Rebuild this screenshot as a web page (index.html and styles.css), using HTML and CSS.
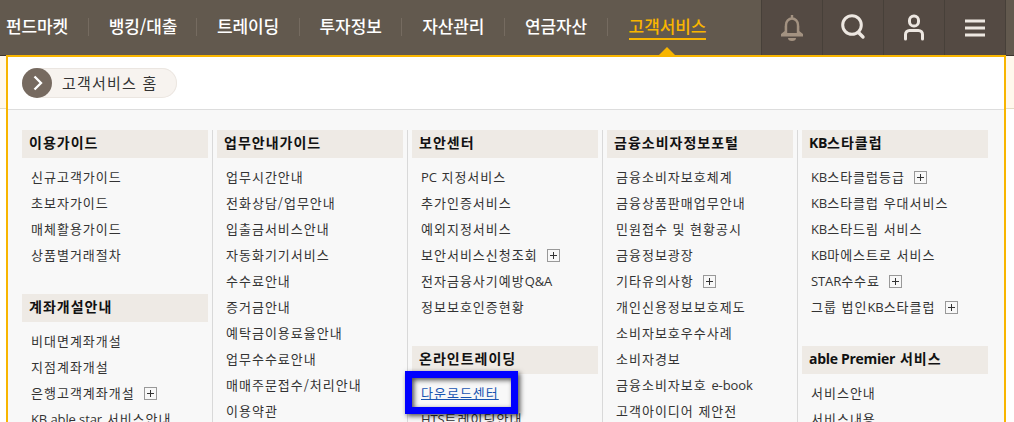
FILE: index.html
```
<!DOCTYPE html>
<html lang="ko">

<head>
	<meta charset="UTF-8">
	<meta name="viewport" content="width=device-width, initial-scale=1.0">
	<title>고객서비스</title>
	<link rel="stylesheet" href="styles.css">
</head>

<body>
	<header class="header">
		<ul class="gnb">
			<li><a>펀드마켓</a></li>
			<li><a>뱅킹/대출</a></li>
			<li><a>트레이딩</a></li>
			<li><a>투자정보</a></li>
			<li><a>자산관리</a></li>
			<li><a>연금자산</a></li>
			<li class="active"><a>고객서비스</a></li>
		</ul>
		<div class="util">
			<a class="util-btn">
				<svg width="24" height="28" viewBox="0 0 24 28">
					<path d="M12 1v3M6 20v-9a6 6.500 0 0 1 12 0v9" fill="none" stroke="#a39281" stroke-width="2.400" />
					<path d="M4.800 12h2.200l-1 7h12l-1-7h2.200v5l3.800 3v2.500H1v-2.500l3.800-3zM8 24h8a4 3 0 0 1-8 0z" fill="#a39281" />
				</svg>
			</a>
			<a class="util-btn">
				<svg width="26" height="28" viewBox="0 0 26 28">
					<circle cx="12" cy="11" r="9.300" fill="none" stroke="#ede7e1" stroke-width="3" />
					<path d="M18.500 18.500l4.500 4.500" stroke="#ede7e1" stroke-width="3.400" stroke-linecap="round" />
				</svg>
			</a>
			<a class="util-btn">
				<svg width="24" height="28" viewBox="0 0 24 28">
					<rect x="7.500" y="2" width="9" height="10" rx="4.300" fill="none" stroke="#ede7e1" stroke-width="3" />
					<path d="M3.500 25v-4.500a4 4 0 0 1 4-4h9a4 4 0 0 1 4 4v4.500" fill="none" stroke="#ede7e1" stroke-width="3" stroke-linecap="round" />
				</svg>
			</a>
			<a class="util-btn">
				<svg width="20" height="28" viewBox="0 0 20 28">
					<path d="M0 7h20M0 14h20M0 21h20" stroke="#ede7e1" stroke-width="3" />
				</svg>
			</a>
		</div>
	</header>

	<main class="content">
		<div class="panel">
			<div class="panel-top">
				<a class="home">
					<span class="home-icon">
						<svg width="10" height="16" viewBox="0 0 10 16">
							<path d="M1.500 1.500L8 8l-6.500 6.500" fill="none" stroke="#fff" stroke-width="2.300" />
						</svg>
					</span>
					<span class="home-text">고객서비스 홈</span>
				</a>
			</div>

			<div class="columns">
				<div class="column">
					<h2>이용가이드</h2>
					<ul>
						<li><a>신규고객가이드</a></li>
						<li><a>초보자가이드</a></li>
						<li><a>매체활용가이드</a></li>
						<li><a>상품별거래절차</a></li>
					</ul>
					<h2>계좌개설안내</h2>
					<ul>
						<li><a>비대면계좌개설</a></li>
						<li><a>지점계좌개설</a></li>
						<li><a>은행고객계좌개설</a><i class="plus"></i></li>
						<li><a><span class="en">KB able star</span> 서비스안내</a></li>
					</ul>
				</div>
				<div class="column">
					<h2>업무안내가이드</h2>
					<ul>
						<li><a>업무시간안내</a></li>
						<li><a>전화상담/업무안내</a></li>
						<li><a>입출금서비스안내</a></li>
						<li><a>자동화기기서비스</a></li>
						<li><a>수수료안내</a></li>
						<li><a>증거금안내</a></li>
						<li><a>예탁금이용료율안내</a></li>
						<li><a>업무수수료안내</a></li>
						<li><a>매매주문접수/처리안내</a></li>
						<li><a>이용약관</a></li>
					</ul>
				</div>
				<div class="column">
					<h2>보안센터</h2>
					<ul>
						<li><a><span class="en">PC</span> 지정서비스</a></li>
						<li><a>추가인증서비스</a></li>
						<li><a>예외지정서비스</a></li>
						<li><a>보안서비스신청조회</a><i class="plus"></i></li>
						<li><a>전자금융사기예방<span class="en">Q&amp;A</span></a></li>
						<li><a>정보보호인증현황</a></li>
					</ul>
					<h2>온라인트레이딩</h2>
					<ul>
						<li class="marked"><a>다운로드센터</a></li>
						<li><a><span class="en">HTS</span>트레이딩안내</a></li>
					</ul>
				</div>
				<div class="column">
					<h2>금융소비자정보포털</h2>
					<ul>
						<li><a>금융소비자보호체계</a></li>
						<li><a>금융상품판매업무안내</a></li>
						<li><a>민원접수 및 현황공시</a></li>
						<li><a>금융정보광장</a></li>
						<li><a>기타유의사항</a><i class="plus"></i></li>
						<li><a>개인신용정보보호제도</a></li>
						<li><a>소비자보호우수사례</a></li>
						<li><a>소비자경보</a></li>
						<li><a>금융소비자보호 <span class="en">e-book</span></a></li>
						<li><a>고객아이디어 제안전</a></li>
					</ul>
				</div>
				<div class="column">
					<h2><span class="en">KB</span>스타클럽</h2>
					<ul>
						<li><a><span class="en">KB</span>스타클럽등급</a><i class="plus"></i></li>
						<li><a><span class="en">KB</span>스타클럽 우대서비스</a></li>
						<li><a><span class="en">KB</span>스타드림 서비스</a></li>
						<li><a><span class="en">KB</span>마에스트로 서비스</a></li>
						<li><a><span class="en">STAR</span>수수료</a><i class="plus"></i></li>
						<li><a>그룹 법인<span class="en">KB</span>스타클럽</a><i class="plus"></i></li>
					</ul>
					<h2><span class="en">able Premier</span> 서비스</h2>
					<ul>
						<li><a>서비스안내</a></li>
						<li><a>서비스내용</a></li>
					</ul>
				</div>
			</div>
		</div>
	</main>
</body>

</html>
```
FILE: styles.css
```
*,
*::before,
*::after {
	margin: 0;
	padding: 0;
	box-sizing: border-box;
}

body {
	height: 422px;
	overflow: hidden;
	background: #fff;
	font-family: "Noto Sans CJK KR", "Noto Sans", sans-serif;
	color: #333;
}

ul {
	list-style: none;
}

/* latin words sit tighter than the hangul */
.en {
	font-family: "Open Sans", "Noto Sans", sans-serif;
}

/* top menu */
.header {
	display: flex;
	justify-content: space-between;
	height: 55px;
	padding: 0 8px 0 6px;
	background: #62594e;
}

.gnb {
	display: flex;
	align-items: flex-start;
	padding-top: 13px;
}

.gnb li {
	position: relative;
	display: flex;
	align-items: center;
	height: 27px;
	font-size: 17px;
	font-weight: 500;
	line-height: 25px;
	letter-spacing: -0.1px;
	color: #fff;
	white-space: nowrap;
}

.gnb li + li::before {
	content: "";
	width: 1px;
	height: 18px;
	margin: 0 20px 0 19.5px;
	background: #756b60;
}

.gnb a {
	height: 27px;
}

.gnb li:nth-child(2) {
	margin-right: -1px;
}

.gnb li.active::before {
	margin-right: 21px;
}

.gnb .active a {
	border-bottom: 2px solid #f8b500;
	color: #f8b500;
}

.gnb .active::after {
	content: "";
	position: absolute;
	right: 31px;
	top: 34px;
	border: 8px solid transparent;
	border-top: 0;
	border-bottom-color: #f8b500;
}

.util {
	display: flex;
	border-right: 1px solid #474039;
}

.util-btn {
	display: flex;
	align-items: center;
	justify-content: center;
	width: 61px;
	height: 55px;
	border-left: 1px solid #474039;
	background: #544a43;
}

/* opened sub menu */
.content {
	height: 367px;
	padding: 0 8px 0 6px;
	background: linear-gradient(#3d352d 1px, #fff8ec 1px, #fff8ec 53px, #e3dcc5 53px, #e3dcc5 54px, #fff 54px);
}

.panel {
	height: 367px;
	overflow: hidden;
	border: 2px solid #f8b500;
	border-bottom: 0;
	background: #f8f8f8;
}

.panel-top {
	height: 53px;
	padding: 11px 14px;
	border-bottom: 1px solid #ddd;
	background: #fff;
}

.home {
	display: flex;
	align-items: center;
	width: 155px;
	height: 30px;
	border-radius: 15px;
	box-shadow: inset 0 0 0 1px #ebe6e1;
	background: #f7f3ef;
	white-space: nowrap;
}

.home-text {
	padding-bottom: 2px;
	font-size: 15px;
	letter-spacing: 1.2px;
}

.home-icon {
	display: flex;
	align-items: center;
	justify-content: center;
	width: 30px;
	height: 30px;
	margin-right: 10px;
	padding-left: 2px;
	border-radius: 50%;
	background: #766a60;
}

.columns {
	display: flex;
	padding: 20px 14px 0;
}

.column {
	flex: none;
	width: 191px;
	height: 320px;
	margin-right: 4px;
	padding-right: 4px;
	border-right: 1px solid #d9d9d9;
}

.column:last-child {
	width: 186px;
	margin: 0;
	padding: 0;
	border: 0;
}

.column h2 {
	height: 28px;
	padding-left: 7px;
	background: #eeeae5;
	font-size: 14px;
	font-weight: 700;
	line-height: 25px;
	letter-spacing: 1px;
	color: #111;
	white-space: nowrap;
}

.column h2 .en {
	letter-spacing: -0.3px;
}

.column ul {
	padding: 6px 0 26px 9px;
}

.column li {
	display: flex;
	align-items: center;
	height: 26px;
	font-size: 13px;
	line-height: 26px;
	letter-spacing: 1px;
	white-space: nowrap;
}

.column li .en {
	letter-spacing: -0.1px;
}

.plus {
	width: 13px;
	height: 13px;
	margin-left: 9px;
	border: 1px solid #999;
	background:
		linear-gradient(#333, #333) center / 7px 1px no-repeat,
		linear-gradient(#333, #333) center / 1px 7px no-repeat;
}

.marked {
	position: relative;
}

.marked a {
	color: #1a55b0;
	text-decoration: underline;
}

.marked::after {
	content: "";
	position: absolute;
	left: -16px;
	top: -9px;
	width: 113px;
	height: 43px;
	border: 7px solid #00f;
	box-shadow: 2px 2px 5px rgba(0, 0, 0, 0.7), inset 2px 2px 5px rgba(0, 0, 0, 0.7);
}
```
